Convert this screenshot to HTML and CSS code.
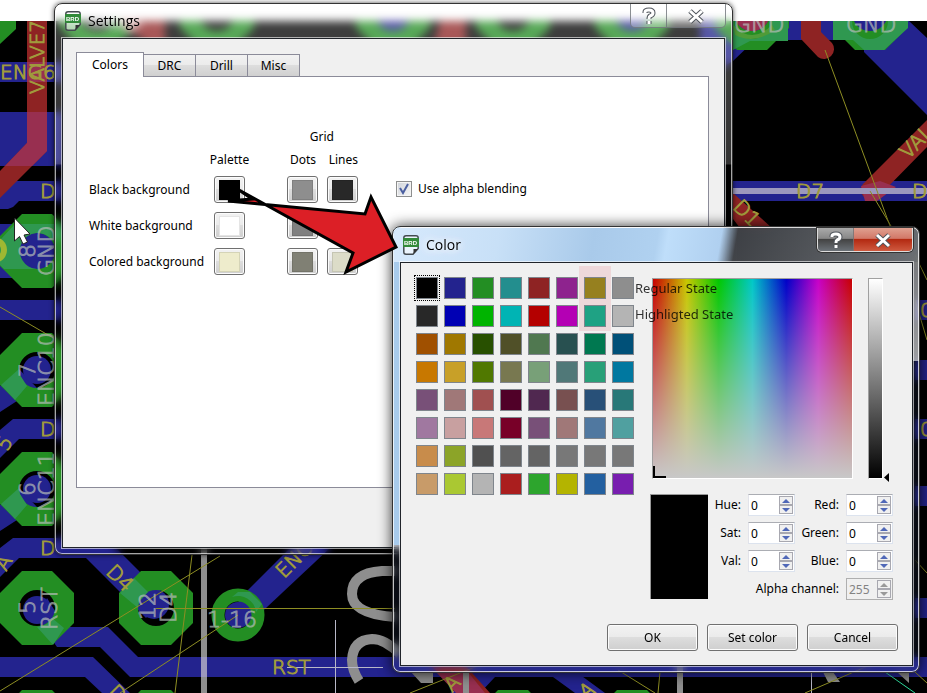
FILE: index.html
```html
<!DOCTYPE html>
<html lang="en">
<head>
<meta charset="utf-8">
<title>Settings</title>
<link rel="stylesheet" href="styles.css">
</head>
<body>
<main class="desktop">
<svg class="board" aria-label="Circuit board">
  <defs>
    <path id="pad" fill-rule="evenodd" d="M-15-37H15L37-15V15L15 37H-15L-37 15V-15ZM0-18a18 18 0 1 0 0 36a18 18 0 1 0 0-36Z"/>
    <clipPath id="canvas"><rect y="21" width="100%" height="100%"/></clipPath>
  </defs>
  <rect width="100%" height="100%" fill="#fff"/>
  <g clip-path="url(#canvas)">
    <rect y="21" width="100%" height="100%" fill="#000"/>
    <g class="blue">
      <path d="M0 62H64V82H0ZM0 112H64V166H0ZM0 209V187L10 181H64V201H19L13 207L8 209ZM0 224H64V278H0ZM0 300H64V320H0Z"/>
      <path d="M0 430L13 419H64V439H19L0 458ZM0 412V386L19 369L37 388Z"/>
      <path d="M0 548L13 538H106L166 598L146 618L86 558H19L0 577ZM0 531V505L19 488L37 507Z"/>
      <path d="M37 618L47 598L65 627H108L138 657H927V677H130L100 647H57ZM0 657H93L130 693H102L85 677H0Z"/>
      <path d="M238 600L310 528L330 548L248 625Z"/>
      <path d="M733 61L755 40H788V21H700V80ZM788 21H909L927 38V115L864 52V40H788ZM733 181H927V201H733ZM915 300H927V320H915ZM915 360H927V380H915ZM915 419H927V439H915ZM915 486H927V506H915ZM915 598H927V618H915ZM450 693L500 660H560L605 693H575L553 677H495L480 693Z"/>
      <circle cx="37" cy="251" r="19"/><circle cx="37" cy="370" r="14"/><circle cx="37" cy="489" r="14"/><circle cx="37" cy="610" r="14"/><circle cx="154" cy="604" r="15"/><circle cx="238" cy="615" r="13"/>
      <circle cx="870" cy="13" r="18"/><circle cx="632" cy="13" r="18"/><circle cx="393" cy="13" r="18"/>
    </g>
    <g class="green">
      <path d="M0 21H16V29L0 44Z"/>
      <use href="#pad" x="97" y="13"/><use href="#pad" x="217" y="13"/><use href="#pad" x="393" y="13"/><use href="#pad" x="513" y="13"/><use href="#pad" x="632" y="13"/><use href="#pad" x="752" y="13"/><use href="#pad" x="870" y="13"/>
      <use href="#pad" x="37" y="251"/><use href="#pad" x="37" y="370"/><use href="#pad" x="37" y="489"/><use href="#pad" x="37" y="608"/><use href="#pad" x="156" y="608"/>
      <use href="#pad" x="37" y="727"/><use href="#pad" x="156" y="727"/><use href="#pad" x="513" y="727"/><use href="#pad" x="632" y="727"/>
      <circle cx="238" cy="615" r="20" fill="none" stroke="#238e23" stroke-width="13"/>
    </g>
    <g class="mix">
      <path d="M0 265V240L15 224H64V240H52A18 18 0 1 0 37 269H4Z"/>
      <path d="M1 385L19 369L20 375L27 386L15 400ZM1 504L19 488L20 494L27 505L15 519ZM120 593L134 578L148 592L139 602L138 608ZM37 627Q50 625 52 618L64 628L53 645ZM238 592H250L262 604L256 612A18 18 0 0 0 232 597ZM833 21H852A18 18 0 0 0 888 21H908V28L884 50H864L853 40H833ZM733 21V50L750 41H788V21H770A18 18 0 0 1 734 21Z"/>
    </g>
    <path d="M733 25Q752 45 772 25L775 30Q755 45 735 35Z" fill="#4f9b38"/>
    <circle cx="752" cy="13" r="18" fill="#982f50"/>
    <g class="red">
      <path d="M27 21H47V151L0 198V171L27 143ZM801 21H821V32L832 43A10 10 0 0 1 818 57L801 39ZM446 0H466V44H434ZM90 0H165V45H150ZM863 184L927 120V147L877 198A10 10 0 0 1 863 184ZM733 193L772 228H740L733 219ZM430 665H465L490 693H460Z"/>
    </g>
    <path d="M27 62H47V82H27ZM27 112H47V151L32 166H5L27 143ZM861 186L880 181L896 187L877 201H865ZM436 672H468L485 693H456Z" fill="#982f50"/>
    <g fill="#8e8e8e">
      <path d="M201 548H207V693H201ZM677 660H683V693H677ZM411 672H433V683H421ZM463 672H469V693H463ZM823 672H833L840 682H828ZM897 672H909V683Z"/>
    </g>
    <path d="M201 657H207V677H201ZM733 188H927V194H733Z" fill="#9c98bd"/>
    <path d="M395 571H382Q352 573 352 594Q352 614 395 617M359 681Q352 670 352 660Q353 640 372 639Q385 639 400 654" fill="none" stroke="#8e8e8e" stroke-width="10"/>
    <path d="M335.500 620V693M287 667.500H383M811.500 672V693" fill="none" stroke="#b8b8c8"/>
    <g class="net">
      <path d="M0 307L55 339M0 691L220 556M192 555L175 693M156 608.500H395M120 693L238 615M825 50L890 226M870 191L891 226M410 693L480 665M618 670L655 693M660 672L658 693M805 693L870 665M915 255L927 280M915 300L927 340M915 560L927 573M915 672L927 683"/>
    </g>
    <path d="M885 672L915 693" stroke="#2fe0a0"/>
    <circle cx="-6" cy="250" r="10" fill="none" stroke="#9eb832" stroke-width="6"/>
    <g class="legend">
      <text x="0" y="79">ENG6</text><text x="40" y="198">D</text><text x="40" y="436">D</text><text x="40" y="555">D</text>
      <text transform="translate(44 94) rotate(-90)">VALVE7</text>
      <text x="272" y="674">RST</text><text x="796" y="198">D7</text><text x="912" y="198">D</text>
      <text transform="translate(105 573) rotate(45)">D4</text>
      <text transform="translate(284 579) rotate(-45)">ENC</text>
      <text transform="translate(908 160) rotate(-45)">VAL</text>
      <text transform="translate(732 208) rotate(45)">D1</text>
      <text transform="translate(7 452) rotate(-60)">5</text>
      <text transform="translate(6 572) rotate(-60)">A</text>
      <text transform="translate(107 693) rotate(45)">D</text>
      <text transform="translate(452 693) rotate(-45)">A</text><text transform="translate(585 700) rotate(-35)">A</text>
      <text x="920" y="317">0</text><text x="920" y="436">0</text>
    </g>
    <g class="names">
      <text transform="translate(54 276) rotate(-90)">GND</text><text transform="translate(35 258) rotate(-90)">8</text>
      <text transform="translate(54 406) rotate(-90)">ENC10</text><text transform="translate(35 377) rotate(-90)">7</text>
      <text transform="translate(54 526) rotate(-90)">ENC11</text><text transform="translate(35 496) rotate(-90)">6</text>
      <text transform="translate(57 630) rotate(-90)">RST</text><text transform="translate(35 614) rotate(-90)">5</text>
      <text transform="translate(155 620) rotate(-90)">12</text><text transform="translate(176 623) rotate(-90)">D4</text>
      <text x="207" y="627">1-16</text><text x="734" y="32">GND</text><text x="846" y="32">GND</text>
    </g>
  </g>
  <path d="M14.500 218V241L19.500 236.500L23 244L27.500 242L24 235L30 234Z" fill="#fff" stroke="#222"/>
</svg>

<section class="window settings" aria-label="Settings">
  <header class="titlebar">
    <svg class="app-icon" viewBox="0 0 16 20"><path d="M3 .8H13Q15.2 .8 15.2 3V13.500L10 19.200H3Q.8 19.200 .8 17V3Q.8 .8 3 .8Z" fill="#fff" fill-opacity=".55" stroke="#444b50" stroke-width="1.500"/><path d="M15 14H10.500V19Z" fill="#333"/><rect y="3" width="16" height="9" rx="1" fill="#318a39"/><text x="1" y="10">BRD</text></svg>
    <h1>Settings</h1>
    <div class="caption">
      <button aria-label="Help"><svg viewBox="0 0 14 18"><path d="M3 6V5Q3 3 7 3T11 6Q11 8 8 9Q7 9.500 7 12M7 14V17" class="halo"/><path d="M3 6V5Q3 3 7 3T11 6Q11 8 8 9Q7 9.500 7 12M7 14V17" class="glyph"/></svg></button>
      <button aria-label="Close" class="close"><svg viewBox="0 0 20 18"><path d="M4 4L16 15M16 4L4 15" class="halo"/><path d="M4 4L16 15M16 4L4 15" class="glyph"/></svg></button>
    </div>
  </header>
  <div class="client">
    <div class="tabs" role="tablist">
      <button role="tab" class="tab active" aria-selected="true">Colors</button><button role="tab" class="tab">DRC</button><button role="tab" class="tab">Drill</button><button role="tab" class="tab">Misc</button>
    </div>
    <div class="panel" role="tabpanel">
      <div class="schemes">
        <span class="grid-title">Grid</span>
        <span class="head palette">Palette</span><span class="head dots">Dots</span><span class="head">Lines</span>
        <span class="name">Black background</span>
        <button class="pick" aria-label="Black palette"><i class="c-black"></i></button><button class="pick dots" aria-label="Black dots"><i class="c-gray"></i></button><button class="pick" aria-label="Black lines"><i class="c-dark"></i></button>
        <span class="name">White background</span>
        <button class="pick" aria-label="White palette"><i class="c-white"></i></button><button class="pick dots" aria-label="White dots"><i class="c-mid"></i></button><button class="pick" aria-label="White lines"><i class="c-light"></i></button>
        <span class="name">Colored background</span>
        <button class="pick" aria-label="Colored palette"><i class="c-cream"></i></button><button class="pick dots" aria-label="Colored dots"><i class="c-olive"></i></button><button class="pick" aria-label="Colored lines"><i class="c-sand"></i></button>
      </div>
      <label class="alpha"><input type="checkbox" checked>Use alpha blending</label>
    </div>
  </div>
</section>

<section class="window color" aria-label="Color">
  <header class="titlebar">
    <svg class="app-icon" viewBox="0 0 16 20"><path d="M3 .8H13Q15.2 .8 15.2 3V13.500L10 19.200H3Q.8 19.200 .8 17V3Q.8 .8 3 .8Z" fill="#fff" fill-opacity=".55" stroke="#444b50" stroke-width="1.500"/><path d="M15 14H10.500V19Z" fill="#333"/><rect y="3" width="16" height="9" rx="1" fill="#318a39"/><text x="1" y="10">BRD</text></svg>
    <h1>Color</h1>
    <div class="caption">
      <button aria-label="Help"><svg viewBox="0 0 14 18"><path d="M3 6V5Q3 3 7 3T11 6Q11 8 8 9Q7 9.500 7 12M7 14V17" class="halo"/><path d="M3 6V5Q3 3 7 3T11 6Q11 8 8 9Q7 9.500 7 12M7 14V17" class="glyph"/></svg></button>
      <button aria-label="Close" class="close"><svg viewBox="0 0 20 18"><path d="M4 4L16 15M16 4L4 15" class="halo"/><path d="M4 4L16 15M16 4L4 15" class="glyph"/></svg></button>
    </div>
  </header>
  <div class="client">
    <div class="marker"></div>
    <div class="picker">
      <div class="swatches" id="swatches"></div>
      <div class="controls">
        <div class="fields-visual">
          <div class="spectrum"></div>
          <div class="value"><svg viewBox="0 0 5 9"><path d="M5 0V9L0 4.500Z"/></svg></div>
        </div>
        <div class="fields">
          <div class="preview"></div>
          <label for="hue">Hue:</label><span class="spin"><input id="hue" value="0"><button aria-label="Hue up"></button><button aria-label="Hue down" class="down"></button></span>
          <label for="red">Red:</label><span class="spin"><input id="red" value="0"><button aria-label="Red up"></button><button aria-label="Red down" class="down"></button></span>
          <label for="sat">Sat:</label><span class="spin"><input id="sat" value="0"><button aria-label="Saturation up"></button><button aria-label="Saturation down" class="down"></button></span>
          <label for="grn">Green:</label><span class="spin"><input id="grn" value="0"><button aria-label="Green up"></button><button aria-label="Green down" class="down"></button></span>
          <label for="val">Val:</label><span class="spin"><input id="val" value="0"><button aria-label="Value up"></button><button aria-label="Value down" class="down"></button></span>
          <label for="blu">Blue:</label><span class="spin"><input id="blu" value="0"><button aria-label="Blue up"></button><button aria-label="Blue down" class="down"></button></span>
          <label for="alp" class="wide">Alpha channel:</label><span class="spin off"><input id="alp" value="255" disabled><button aria-label="Alpha up" disabled></button><button aria-label="Alpha down" class="down" disabled></button></span>
        </div>
      </div>
    </div>
    <div class="actions"><button>OK</button><button>Set color</button><button>Cancel</button></div>
    <div class="notes"><span>Regular State</span><span>Highligted State</span></div>
  </div>
</section>

<svg class="pointer" viewBox="0 0 180 90" aria-hidden="true"><path d="M19 5L133 68L126 87L176 62L151 12L145 29L8 16L32 14Z" fill="#dc1f26" stroke="#000" stroke-width="3" stroke-miterlimit="10"/></svg>
</main>
<script src="script.js"></script>
</body>
</html>
```
FILE: script.js
```js
const colors = [
  "#000000 #23238e #238e23 #238e8e #8e2323 #8e238e #96801f #8e8e8e",
  "#282828 #0000b4 #00b400 #00b4b4 #b40000 #b400b4 #1fa284 #b4b4b4",
  "#a05000 #a07800 #285000 #505028 #507850 #285050 #007850 #005078",
  "#c87800 #c8a028 #507800 #787850 #78a078 #507878 #28a078 #0078a0",
  "#785078 #a07878 #a05050 #500028 #502850 #785050 #285078 #287878",
  "#a078a0 #c8a0a0 #c87878 #780028 #785078 #a07878 #5078a0 #50a0a0",
  "#c88c4b #8ca428 #505050 #646464 #646464 #787878 #787878 #787878",
  "#c89b69 #aac832 #b4b4b4 #aa1e1e #2da52d #b4b400 #2360a0 #781eaf"
].join(" ").split(" ");
const holder = document.getElementById("swatches");
colors.forEach((value, index) => {
  const swatch = document.createElement("button");
  swatch.className = index === 0 ? "swatch selected" : "swatch";
  swatch.style.backgroundColor = value;
  swatch.setAttribute("aria-label", value);
  holder.append(swatch);
});
```
FILE: styles.css
```css
* { box-sizing: border-box; }
body { margin: 0; font: 12px/16px "Noto Sans", sans-serif; color: #000; }
button, input { font: inherit; color: inherit; margin: 0; }
.desktop { position: relative; min-height: 100vh; overflow: hidden; background: #000; }

/* Circuit board behind the windows */
.board { position: absolute; inset: 0; width: 100%; height: 100%; }
.board text { font-family: "DejaVu Sans", sans-serif; font-weight: 200; stroke-width: 1; }
.blue { fill: #23238e; }
.green { fill: #238e23; }
.mix { fill: #2f9850; }
.red { fill: #8e2323; }
.net { fill: none; stroke: #8e8e23; }
.board .legend text { fill: #a09a3c; stroke: #a09a3c; font-size: 20px; }
.board .names text { fill: #b4bcb8; stroke: #b4bcb8; opacity: .7; font-size: 22px; }

/* Glass windows */
.window { position: absolute; padding: 0 6px 6px 7px; border: 1px solid #333; border-radius: 8px; backdrop-filter: blur(4px); }
.settings { left: 54px; top: 3px; width: 679px; background: linear-gradient(rgba(255,255,255,.25), rgba(255,255,255,.2) 160px, transparent 161px); box-shadow: inset 0 0 0 1px rgba(255,255,255,.65), 0 0 5px rgba(0,0,0,.7); }
.color { left: 392px; top: 226px; width: 528px; background: linear-gradient(to right, #a8cbec 8px, transparent 8px) 0 0 / 100% 318px no-repeat, linear-gradient(rgba(255,255,255,.4), rgba(255,255,255,.6) 134px, transparent 134px), rgba(60,80,130,.15); box-shadow: inset 0 0 0 1px rgba(255,255,255,.75), 0 0 14px rgba(0,0,0,.8); }
.titlebar { display: flex; align-items: center; height: 34px; padding-left: 3px; }
.color .titlebar { margin: 1px -5px 0 -6px; padding: 0 5px 0 9px; border-radius: 6px 6px 0 0; background: linear-gradient(100deg, #d6e9fc, #c8e0f7 20%, #a9caea 38%, #b0d1f0 50%, #bfdefa 52%, #b0d0f0 62%, rgba(50,53,58,.8) 65%, rgba(100,105,110,.6)); }
.app-icon { width: 16px; height: 20px; }
.app-icon text { font: 700 6px "Liberation Sans", sans-serif; fill: #fff; }
.titlebar h1 { flex: 1; margin: 0 0 0 7px; font: 14px/20px "Open Sans", sans-serif; text-shadow: 0 0 8px #fff, 0 0 10px #fff, 0 0 14px #fff; }
.caption { display: flex; align-self: flex-start; height: 24px; border: 1px solid rgba(110,115,120,.8); border-top: 0; border-radius: 0 0 5px 5px; background: rgba(255,255,255,.25); overflow: hidden; }
.caption button { display: grid; place-items: center; width: 35px; padding: 0; border: 0; background: none; }
.caption .close { width: 59px; border-left: 1px solid rgba(110,115,120,.8); }
.caption svg { height: 18px; }
.halo { fill: none; stroke: #50555c; stroke-width: 5; }
.glyph { fill: none; stroke: #fff; stroke-width: 3; }
.color .caption { border-color: #ddd; box-shadow: 0 0 0 1px #333; }
.color .caption button { background: linear-gradient(#aaa, #888 45%, #444 50%, #6c7278); }
.color .caption .close { background: linear-gradient(#e0a090, #d27868 45%, #b32a12 50%, #cf5a40); }
.client { position: relative; border: 1px solid #20242a; outline: 1px solid rgba(255,255,255,.6); background: #f0f0f0; }

/* Settings window */
.settings .client { padding: 14px 15px 59px 13px; margin-right: 1px; }
.tabs { display: flex; align-items: flex-end; height: 23px; }
.tab { min-width: 53px; height: 22px; padding: 0; border: 1px solid #8b8b99; border-bottom: 0; margin-right: -1px; background: linear-gradient(#f2f2f2, #ebebeb 49%, #ddd 50%, #d0d0d0); }
.tab.active { position: relative; height: 25px; padding: 0 15px; margin-bottom: -1px; background: #fff; }
.panel { display: flex; align-items: flex-start; min-height: 412px; padding: 52px 12px 0; border: 1px solid #8b8b99; background: #fff; }
.schemes { display: grid; grid-template-columns: 125px 31px 73px 40px; row-gap: 9px; align-items: center; justify-items: end; margin-right: 38px; }
.head { height: 15px; }
.grid-title { grid-column: 3 / 5; margin-right: 24px; margin-bottom: -2px; }
.head.palette { grid-column: 2; justify-self: center; }
.head.dots { margin-right: 2px; }
.name { justify-self: start; white-space: nowrap; }
.pick { width: 31px; height: 27px; padding: 2px 4px; border: 1px solid #707070; border-radius: 3px; box-shadow: inset 0 0 0 1px #fcfcfc; background: linear-gradient(#f2f2f2, #ebebeb 49%, #ddd 50%, #cfcfcf); }
.pick i { display: block; width: 21px; height: 20px; border: 1px solid rgba(0,0,0,.1); }
.c-black { background: #000; } .c-gray { background: #8e8e8e; } .c-dark { background: #282828; }
.c-white { background: #fff; } .c-mid { background: #808080; } .c-light { background: #ddd; }
.c-cream { background: #eeeccc; } .c-olive { background: #808074; } .c-sand { background: #dcdcc8; }
.alpha { display: flex; align-items: center; gap: 6px; margin-top: 52px; white-space: nowrap; }
.alpha input { appearance: none; width: 16px; height: 16px; border: 1px solid #8e8f8f; background: url("data:image/svg+xml,%3Csvg xmlns='http://www.w3.org/2000/svg' viewBox='0 0 14 14'%3E%3Cpath d='M3 6l3 5 5-9' fill='none' stroke='%234b5fa0' stroke-width='2'/%3E%3C/svg%3E"), linear-gradient(135deg, #cfd3da, #f6f6f6); box-shadow: inset 0 0 0 1px #f4f4f4; }

/* Color window */
.color .client { padding: 14px 14px 14px 15px; }
.picker { display: flex; gap: 16px; }
.swatches { position: relative; display: grid; grid-template-columns: repeat(8, 22px); gap: 6px; align-content: start; }
.swatch { width: 22px; height: 22px; padding: 0; border: 1px solid #7f858c; }
.swatch.selected { outline: 1px dotted #000; outline-offset: 1px; }
.fields-visual { display: flex; gap: 15px; margin: 1px 0 15px 2px; }
.spectrum { position: relative; width: 201px; height: 201px; border: 1px solid #a0a0a0; border-color: #a0a0a0 #fff #fff #a0a0a0; background: linear-gradient(rgba(200,200,200,0), #c8c8c8), linear-gradient(to right, #c80000, #c8c800 17%, #00c800 33%, #00c8c8 50%, #0000c8 67%, #c800c8 83%, #c80000); }
.spectrum::after { content: ""; position: absolute; left: 0; bottom: 0; width: 11px; height: 10px; border: solid #000; border-width: 0 0 2px 2px; }
.value { position: relative; width: 15px; border: 1px solid #a0a0a0; border-color: #a0a0a0 #fff #fff #a0a0a0; background: linear-gradient(#fff, #000); }
.value svg { position: absolute; right: -7px; bottom: -4px; width: 5px; height: 9px; }
.fields { display: grid; grid-template-columns: 58px 26px 47px 37px 47px; grid-auto-rows: 22px; gap: 6px 7px; align-items: center; }
.fields label { justify-self: end; white-space: nowrap; }
.fields .wide { grid-column: 2 / 5; }
.preview { grid-row: 1 / 5; height: 105px; align-self: start; border: 1px solid #999; border-width: 1px 0 0 1px; background: #000; }
.spin { display: grid; grid-template: 9px 9px / 1fr 14px; height: 22px; padding: 1px; border: 1px solid #abadb3; border-color: #abadb3 #dce3ee #dce3ee #e2e3ea; background: #fff; }
.spin input { grid-row: 1 / 3; width: 100%; height: 18px; padding: 0 1px; border: 0; background: none; }
.spin button { display: grid; place-items: center; padding: 0; border: 1px solid #a8a8b0; background: #f0f0f0; }
.spin button::before { content: ""; border: 4px solid transparent; border-top: 0; border-bottom: 4px solid #5068b8; }
.spin .down::before { border-bottom: 0; border-top: 4px solid #5068b8; }
.spin.off { background: #f0f0f0; border-color: #afafaf; }
.spin.off, .spin.off input { color: #838383; }
.spin.off button::before { border-bottom-color: #999; }
.spin.off .down::before { border-top-color: #999; }
.actions { display: flex; justify-content: flex-end; gap: 9px; margin-top: 24px; }
.actions button { width: 91px; height: 27px; padding: 0; border: 1px solid #707070; border-radius: 3px; box-shadow: inset 0 0 0 1px #fcfcfc; background: linear-gradient(#f2f2f2, #ebebeb 49%, #ddd 50%, #cfcfcf); }
.marker { position: absolute; left: 178px; top: 3px; width: 32px; height: 65px; background: rgba(230,130,140,.22); }
.notes { position: absolute; left: 234px; top: 17px; display: grid; gap: 10px; font-size: 13px; color: rgba(0,0,0,.8); }
.pointer { position: absolute; left: 220px; top: 185px; width: 180px; height: 90px; }
```
